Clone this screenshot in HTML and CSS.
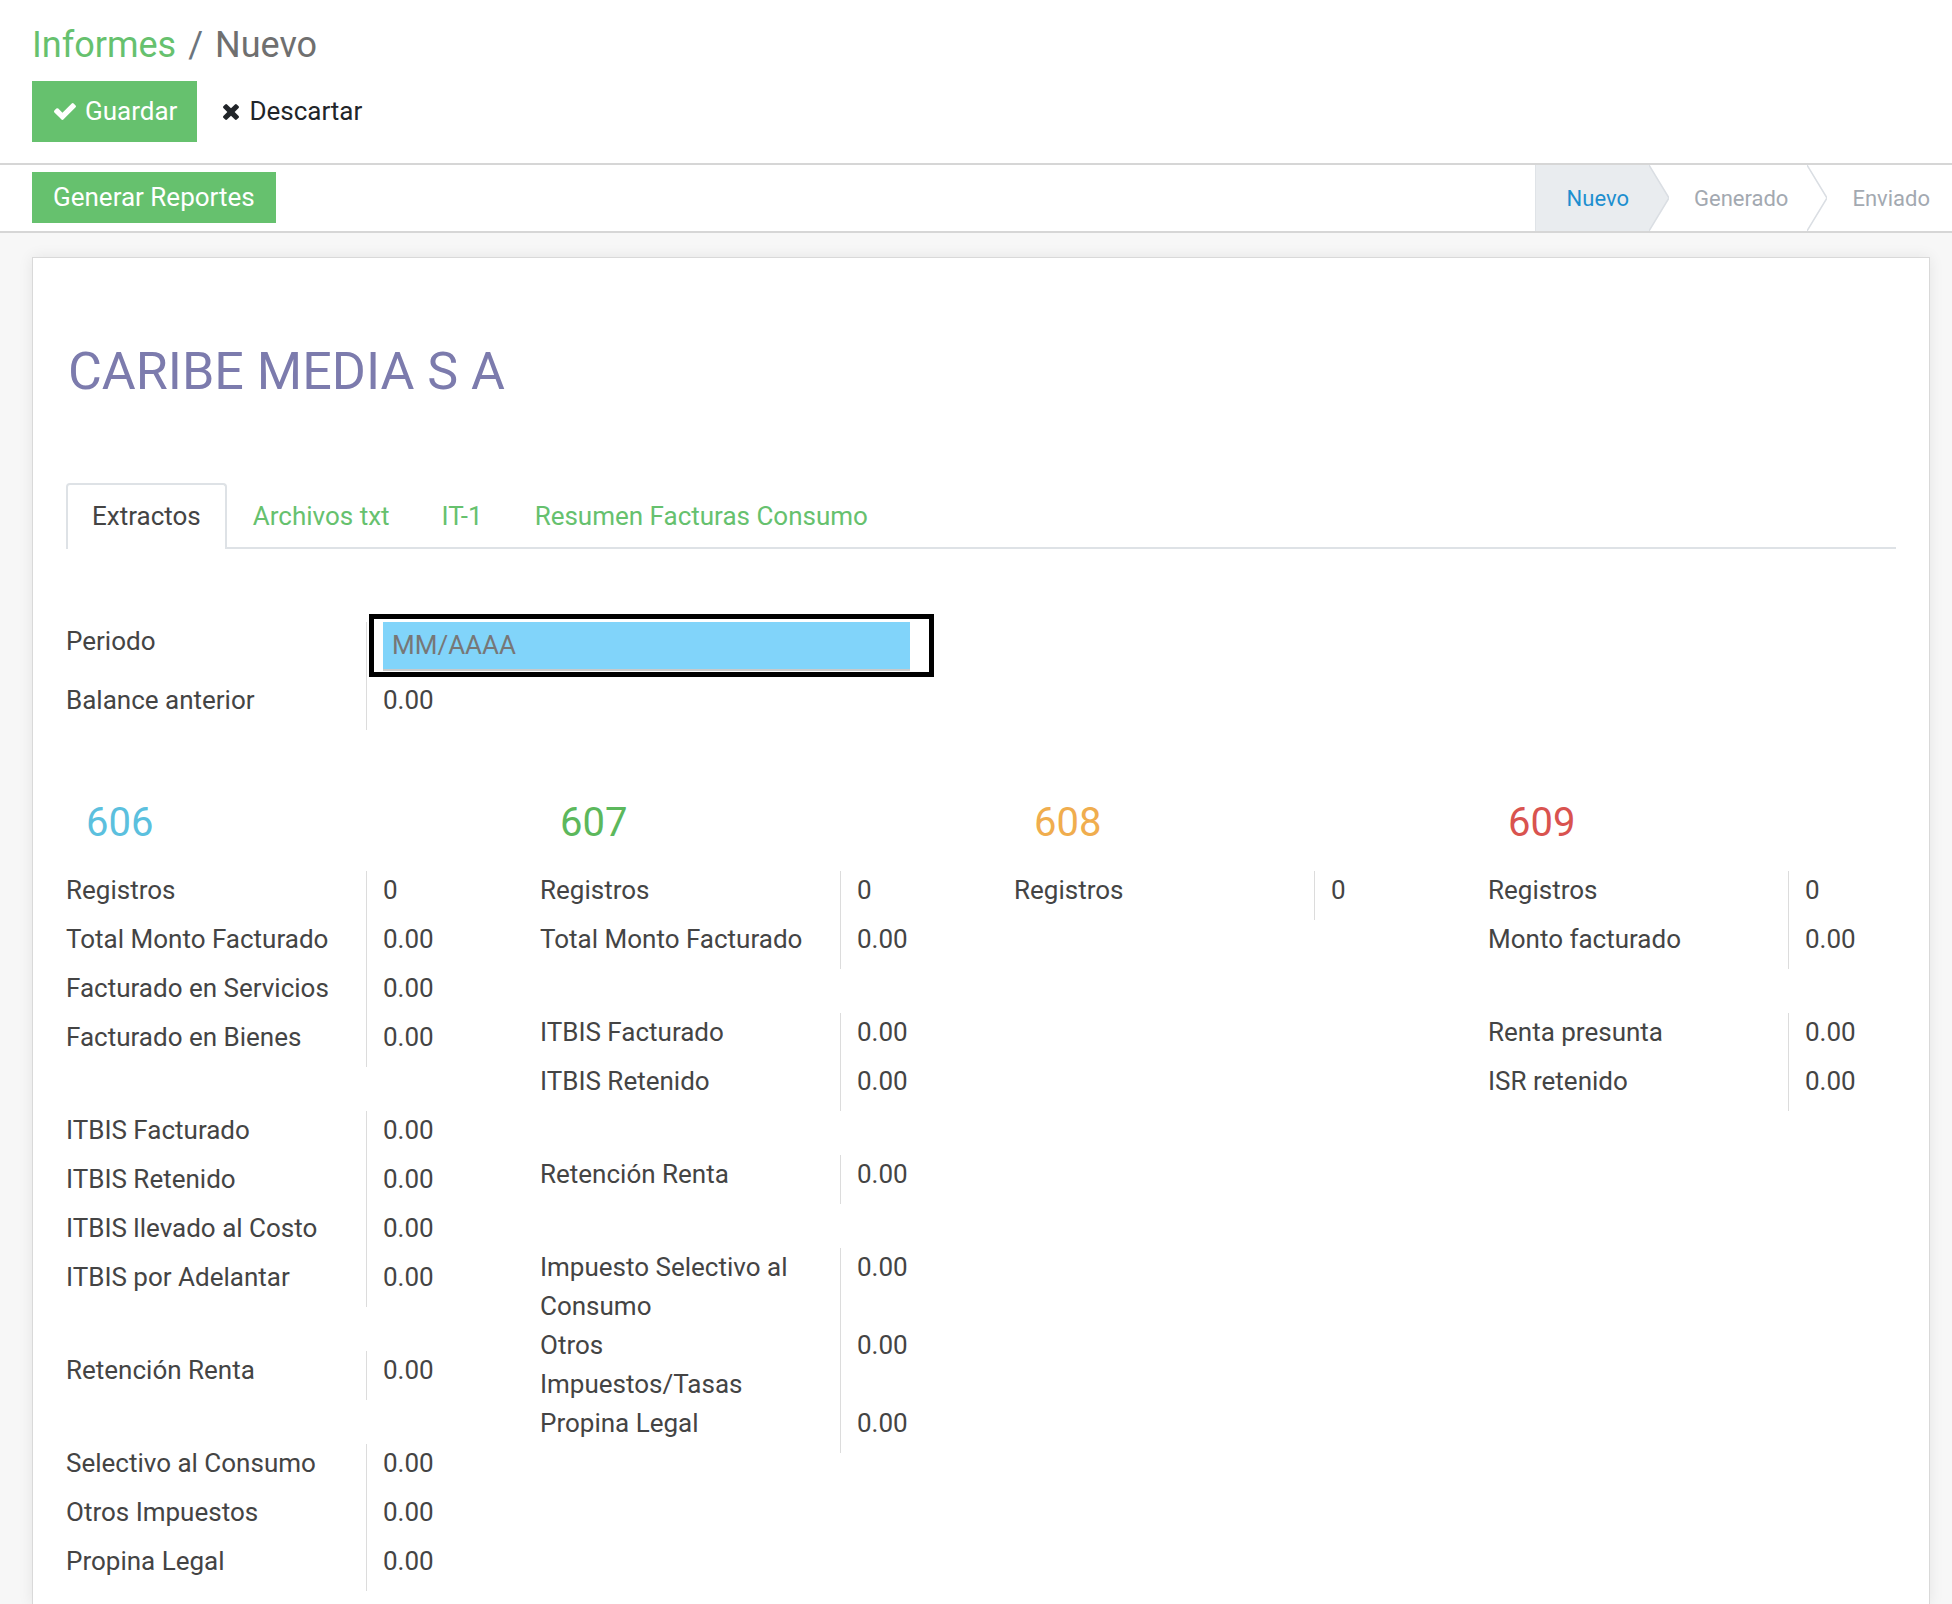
FILE: index.html
```html
<!DOCTYPE html>
<html lang="es">
<head>
<meta charset="utf-8">
<title>Informes / Nuevo</title>
<link rel="stylesheet" href="styles.css">
</head>
<body>
<div class="control-panel">
  <div class="breadcrumb"><span class="crumb-link">Informes</span><span class="crumb-sep">/</span><span class="crumb-active">Nuevo</span></div>
  <div class="cp-buttons">
    <button class="btn btn-primary btn-save"><svg class="ico-check" viewBox="121 334 1550 1188"><path d="M1671 566q0 40-28 68l-724 724-136 136q-28 28-68 28t-68-28l-136-136-362-362q-28-28-28-68t28-68l136-136q28-28 68-28t68 28l294 295 656-657q28-28 68-28t68 28l136 136q28 28 28 68z"/></svg>Guardar</button>
    <button class="btn btn-link"><svg class="ico-times" viewBox="302 366 1188 1188"><path d="M1490 1322q0 40-28 68l-136 136q-28 28-68 28t-68-28l-294-294-294 294q-28 28-68 28t-68-28l-136-136q-28-28-28-68t28-68l294-294-294-294q-28-28-28-68t28-68l136-136q28-28 68-28t68 28l294 294 294-294q28-28 68-28t68 28l136 136q28 28 28 68t-28 68l-294 294 294 294q28 28 28 68z"/></svg>Descartar</button>
  </div>
</div>

<div class="statusbar">
  <button class="btn btn-primary btn-generate">Generar Reportes</button>
  <div class="status-steps">
    <div class="step step-active">Nuevo</div>
    <svg class="chevron" viewBox="0 0 20 66" preserveAspectRatio="none"><polygon class="chev-fill" points="0,0 20,33 0,66"/><polyline class="chev-line" points="0,0 20,33 0,66"/></svg>
    <div class="step">Generado</div>
    <svg class="chevron" viewBox="0 0 20 66" preserveAspectRatio="none"><polyline class="chev-line" points="0,0 20,33 0,66"/></svg>
    <div class="step step-last">Enviado</div>
  </div>
</div>

<div class="sheet-bg">
  <div class="sheet">
    <h1 class="company">CARIBE MEDIA S A</h1>

    <ul class="tabs">
      <li class="tab tab-active">Extractos</li>
      <li class="tab">Archivos txt</li>
      <li class="tab">IT-1</li>
      <li class="tab">Resumen Facturas Consumo</li>
    </ul>

    <div class="group group-period">
      <div class="lbl">Periodo</div>
      <div class="val val-input"><div class="date-input">MM/AAAA</div></div>
      <div class="lbl">Balance anterior</div>
      <div class="val">0.00</div>
    </div>

    <div class="cols">
      <div class="col">
        <h2 class="col-title t606">606</h2>
        <div class="group">
          <div class="lbl">Registros</div><div class="val">0</div>
          <div class="lbl">Total Monto Facturado</div><div class="val">0.00</div>
          <div class="lbl">Facturado en Servicios</div><div class="val">0.00</div>
          <div class="lbl">Facturado en Bienes</div><div class="val">0.00</div>
        </div>
        <div class="group">
          <div class="lbl">ITBIS Facturado</div><div class="val">0.00</div>
          <div class="lbl">ITBIS Retenido</div><div class="val">0.00</div>
          <div class="lbl">ITBIS llevado al Costo</div><div class="val">0.00</div>
          <div class="lbl">ITBIS por Adelantar</div><div class="val">0.00</div>
        </div>
        <div class="group">
          <div class="lbl">Retención Renta</div><div class="val">0.00</div>
        </div>
        <div class="group">
          <div class="lbl">Selectivo al Consumo</div><div class="val">0.00</div>
          <div class="lbl">Otros Impuestos</div><div class="val">0.00</div>
          <div class="lbl">Propina Legal</div><div class="val">0.00</div>
        </div>
      </div>

      <div class="col">
        <h2 class="col-title t607">607</h2>
        <div class="group">
          <div class="lbl">Registros</div><div class="val">0</div>
          <div class="lbl">Total Monto Facturado</div><div class="val">0.00</div>
        </div>
        <div class="group">
          <div class="lbl">ITBIS Facturado</div><div class="val">0.00</div>
          <div class="lbl">ITBIS Retenido</div><div class="val">0.00</div>
        </div>
        <div class="group">
          <div class="lbl">Retención Renta</div><div class="val">0.00</div>
        </div>
        <div class="group">
          <div class="lbl">Impuesto Selectivo al<br>Consumo</div><div class="val">0.00</div>
          <div class="lbl">Otros<br>Impuestos/Tasas</div><div class="val">0.00</div>
          <div class="lbl">Propina Legal</div><div class="val">0.00</div>
        </div>
      </div>

      <div class="col">
        <h2 class="col-title t608">608</h2>
        <div class="group">
          <div class="lbl">Registros</div><div class="val">0</div>
        </div>
      </div>

      <div class="col">
        <h2 class="col-title t609">609</h2>
        <div class="group">
          <div class="lbl">Registros</div><div class="val">0</div>
          <div class="lbl">Monto facturado</div><div class="val">0.00</div>
        </div>
        <div class="group">
          <div class="lbl">Renta presunta</div><div class="val">0.00</div>
          <div class="lbl">ISR retenido</div><div class="val">0.00</div>
        </div>
      </div>
    </div>
  </div>
</div>
</body>
</html>
```

FILE: styles.css
```css
* { box-sizing: border-box; }

html, body {
  margin: 0;
  padding: 0;
  overflow: hidden;
}

body {
  font-family: Roboto, "Noto Sans", "Liberation Sans", sans-serif;
  font-size: 26px;
  color: #444;
  background: #f7f7f7;
  height: 1604px;
}

/* ---------- control panel ---------- */
.control-panel {
  background: #fff;
  padding: 24px 0 21px 32px;
  border-bottom: 2px solid #d6d6d6;
}

.breadcrumb {
  font-size: 36px;
  line-height: 42px;
  white-space: nowrap;
}

.crumb-link { color: #66c16e; }
.crumb-sep { color: #6c757d; margin: 0 12px; }
.crumb-active { color: #6f6f6f; }

.cp-buttons {
  display: flex;
  margin-top: 15px;
}

.btn {
  font-family: inherit;
  font-size: 26px;
  line-height: 37px;
  border: 0;
  border-radius: 0;
  cursor: pointer;
  display: flex;
  align-items: center;
}

.btn-primary {
  background: #66c16e;
  color: #fff;
}

.btn-save {
  padding: 12px 20px 12px 22px;
  height: 61px;
}

.ico-check {
  width: 22px;
  height: 17px;
  fill: #fff;
  margin-right: 9px;
}

.btn-link {
  background: transparent;
  color: #212529;
  padding: 12px 20px 12px 26px;
}

.ico-times {
  width: 16px;
  height: 16px;
  fill: #212529;
  margin-right: 10px;
}

/* ---------- statusbar ---------- */
.statusbar {
  background: #fff;
  display: flex;
  justify-content: space-between;
  align-items: stretch;
  height: 68px;
  border-bottom: 2px solid #d6d6d6;
}

.btn-generate {
  margin: 7px 0 8px 32px;
  padding: 7px 21px;
  height: 51px;
}

.status-steps {
  display: flex;
  align-items: stretch;
}

.step {
  display: flex;
  align-items: center;
  font-size: 22px;
  color: #a3a9b1;
  padding: 0 19px 0 5px;
  background: #fff;
}

.step-active {
  background: #e9ecef;
  color: #1d8fcf;
  padding: 0 20px 0 31px;
  border-left: 1px solid #dfe3e7;
}

.step-last { padding-right: 22px; }

.chevron {
  width: 20px;
  height: 66px;
  display: block;
  margin-right: 20px;
}

.chev-fill { fill: #e9ecef; }
.chev-line {
  fill: none;
  stroke: #dadee3;
  stroke-width: 1.5;
}

/* ---------- sheet ---------- */
.sheet-bg {
  padding: 24px 22px 0 32px;
  height: 1372px;
}

.sheet {
  background: #fff;
  border: 1px solid #d9d9d9;
  border-bottom: 0;
  box-shadow: 0 0 14px rgba(0, 0, 0, 0.08);
  padding: 83px 33px 0 33px;
  height: 100%;
  overflow: hidden;
}

.company {
  margin: 0;
  padding-left: 2px;
  font-size: 52px;
  line-height: 62px;
  font-weight: 400;
  color: #7c7bad;
}

.tabs {
  list-style: none;
  margin: 80px 0 0 0;
  padding: 0;
  display: flex;
  border-bottom: 2px solid #dee2e6;
}

.tab {
  padding: 12px 24px 14px;
  line-height: 38px;
  border: 2px solid transparent;
  border-bottom: 0;
  margin-bottom: -2px;
  color: #66c16e;
  border-radius: 4px 4px 0 0;
}

.tab-active {
  color: #444;
  background: #fff;
  border-color: #dee2e6;
}

/* ---------- groups ---------- */
.group {
  display: grid;
  grid-template-columns: 300px 1fr;
  line-height: 39px;
  margin-bottom: 44px;
}

.lbl {
  white-space: nowrap;
  color: #444;
}

.val {
  border-left: 1px solid #dcdcdc;
  padding: 0 0 10px 16px;
  white-space: nowrap;
}

.group-period {
  margin-top: 73px;
  margin-bottom: 0;
}

.val-input {
  position: relative;
}

.date-input {
  position: relative;
  width: 527px;
  height: 49px;
  background: #81d4fa;
  border-bottom: 2px solid #c9c9c9;
  color: #777;
  padding-left: 9px;
  line-height: 47px;
}

.date-input::after {
  content: "";
  position: absolute;
  left: -14px;
  right: -24px;
  top: -8px;
  bottom: -8px;
  border: 5px solid #000;
}

.cols {
  display: grid;
  grid-template-columns: repeat(4, 1fr);
  column-gap: 66px;
  margin-top: 69px;
}

.col-title {
  margin: 0 0 24px 0;
  padding-left: 20px;
  font-size: 40px;
  line-height: 48px;
  font-weight: 400;
}

.t606 { color: #5bc0de; }
.t607 { color: #5cb85c; }
.t608 { color: #f0ad4e; }
.t609 { color: #d9534f; }
```
